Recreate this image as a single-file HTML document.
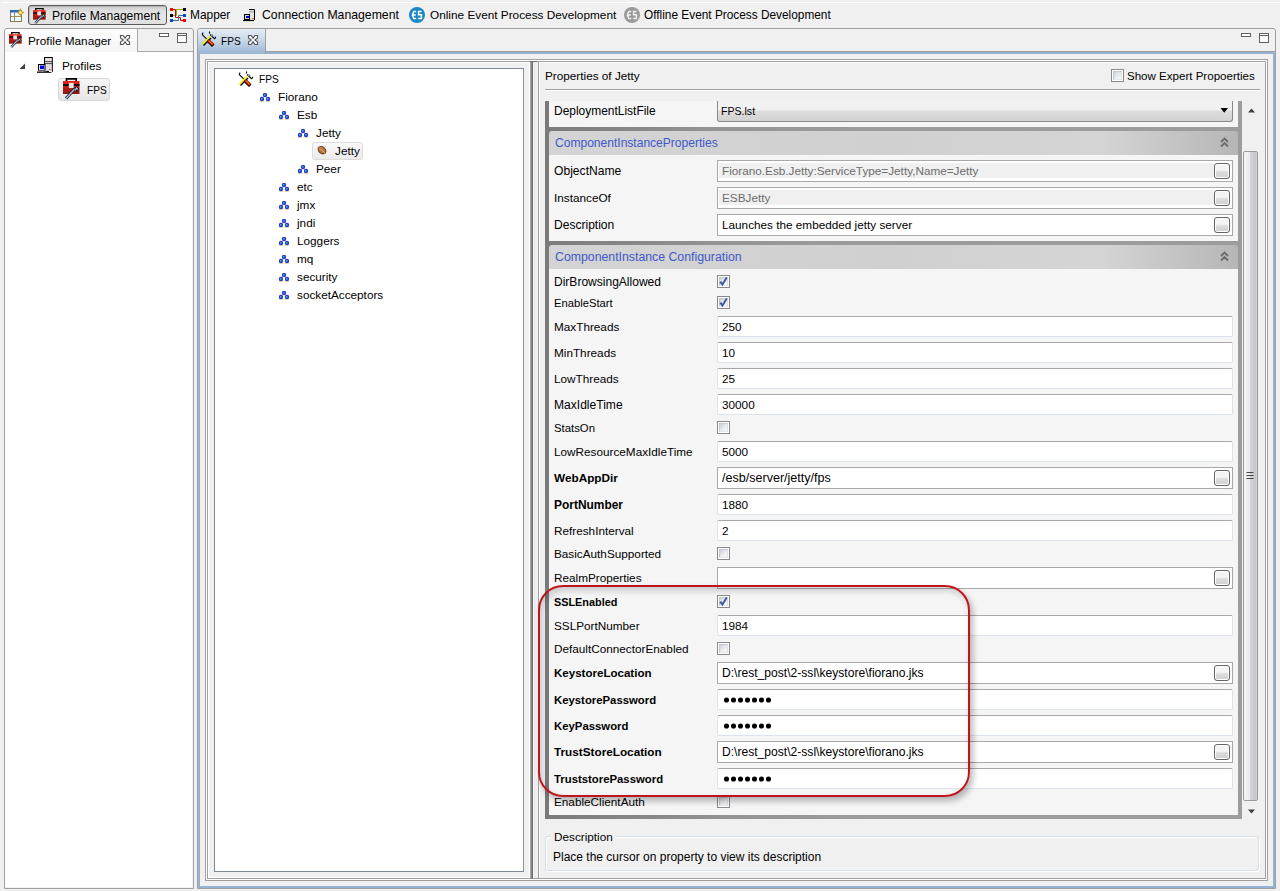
<!DOCTYPE html>
<html><head><meta charset="utf-8">
<style>
*{box-sizing:border-box;margin:0;padding:0}
html,body{width:1280px;height:891px;overflow:hidden;background:#f0f0f0;font-family:"Liberation Sans",sans-serif;font-size:11.75px;color:#000}
.a{position:absolute}
.t{position:absolute;white-space:nowrap;line-height:14px}
.b{font-weight:bold;font-size:11.35px}
.cb{width:13px;height:13px;border:1px solid #8a8a8a;background:#fff}
.cb::before{content:"";position:absolute;left:1px;top:1px;width:9px;height:9px;box-sizing:border-box;border:1px solid #c4c8d0;border-right-color:#e0e2e6;border-bottom-color:#e6e8ea;background:linear-gradient(135deg,#cdd1d8,#eceef0 60%,#f8f8f8)}
.cb svg{left:0;top:0}
.fp{width:516px;border:1px solid #dde3ea;border-top-color:#a8a8a8;border-radius:2px}
.fb{width:516px;border:1px solid #a8a8a8}
.btn{width:16px;height:16px;border:1.5px solid #646464;border-radius:3px;background:linear-gradient(#f4f4f4 45%,#dcdcdc 55%,#d0d0d0);box-shadow:inset 0 0 0 1px #fff}
.hdr{border-radius:3px 3px 0 0;background:linear-gradient(90deg,#d4d4d4 0%,#d0d0d0 50%,#d5d5d5 80%,#b6b6b6 100%)}
.hdt{color:#4058cc}

</style></head><body>
<!-- top white line -->
<div class="a" style="left:2px;top:2px;width:1278px;height:1px;background:#fff"></div>


<!-- TOOLBAR -->
<svg class="a" style="left:10px;top:8px" width="15" height="15" viewBox="0 0 15 15">
 <rect x="0.5" y="2.5" width="11" height="11" fill="#eaf8ff" stroke="#8a7a50"/>
 <rect x="0" y="2" width="10" height="2.5" fill="#2a6ac0"/>
 <line x1="4.5" y1="4" x2="4.5" y2="13" stroke="#8a8a70"/>
 <line x1="1" y1="8.5" x2="11" y2="8.5" stroke="#a09060"/>
 <path d="M10.5 0 L12 3 L14.5 4.5 L12 6 L10.5 9 L9 6 L6.5 4.5 L9 3 Z" fill="#c8a020"/>
 <circle cx="10.5" cy="4.5" r="1.2" fill="#fff8c0"/>
</svg>
<div class="a" style="left:28px;top:5px;width:139px;height:20px;border:1px solid #5a5a5a;border-radius:3px;background:linear-gradient(#cfcfcf,#e2e2e2 35%,#e6e6e6 60%,#dedede);box-shadow:inset 1px 1px 1px rgba(0,0,0,.15)"></div>
<svg class="a" style="left:33px;top:8px" width="13" height="16" viewBox="0 0 17 22" preserveAspectRatio="none">
 <defs><linearGradient id="tbg1" x1="0" y1="0" x2="0" y2="1"><stop offset="0" stop-color="#e82418"/><stop offset="1" stop-color="#8c1414"/></linearGradient></defs>
 <path d="M3.5 3.5 V0.8 H13.2 V3.5" fill="none" stroke="#000" stroke-width="1.7"/>
 <rect x="0" y="3" width="16.5" height="13" fill="url(#tbg1)"/>
 <rect x="0" y="6" width="16.5" height="2" fill="#141010"/>
 <rect x="6.2" y="5.2" width="4" height="4.5" fill="#e4e4e4" stroke="#fff" stroke-width="0.7"/>
 <path d="M3 20.5 L12.5 10" stroke="#111" stroke-width="3"/>
 <path d="M3 20.5 L12.5 10" stroke="#9cb8d0" stroke-width="1.8"/>
 <path d="M11 11.5 L13.5 8.5 L16 11 L15 12.5 L13 12 L13.8 14" stroke="#111" stroke-width="1" fill="#9cb8d0"/>
</svg>
<div class="t" style="left:52px;top:9px;font-size:12.1px">Profile Management</div>

<svg class="a" style="left:168px;top:6px" width="20" height="18" viewBox="0 0 20 18">
 <path d="M15 3.5 H8.5 V9.5 H5" stroke="#a0a000" stroke-width="1" fill="none"/>
 <path d="M5 3.5 H7.5 V11.5 H12.5 V14.5 H15" stroke="#b01010" stroke-width="1" fill="none"/>
 <path d="M5 14.5 H10.5 V9.5 H15" stroke="#3a6aa0" stroke-width="1" fill="none"/>
 <rect x="2" y="2" width="3" height="3" fill="#ff0000"/>
 <rect x="15" y="2" width="3" height="3" fill="#000"/>
 <rect x="2" y="8" width="3" height="3" fill="#000"/>
 <rect x="15" y="8" width="3" height="3" fill="#0050c0"/>
 <rect x="2" y="13" width="3" height="3" fill="#0050c0"/>
 <rect x="15" y="13" width="3" height="3" fill="#ff0000"/>
</svg>
<div class="t" style="left:190px;top:8px;font-size:11.9px">Mapper</div>

<svg class="a" style="left:238px;top:4px" width="22" height="22" viewBox="0 0 22 22">
 <rect x="11" y="5" width="6" height="11" fill="#e4e4e4"/>
 <path d="M11 5.5 H16.5 V16" stroke="#000" stroke-width="1" fill="none"/>
 <rect x="11" y="7" width="5" height="1.5" fill="#b0b0b0"/>
 <rect x="14" y="14" width="2" height="1" fill="#e06060"/>
 <rect x="6.5" y="10.5" width="5" height="5" fill="#d8d8c0" stroke="#000" stroke-width="1"/>
 <rect x="8" y="12" width="3" height="2" fill="#0000ff"/>
 <path d="M5 16.5 H16" stroke="#000" stroke-width="1.2"/>
</svg>
<div class="t" style="left:262px;top:8px;font-size:12.25px">Connection Management</div>

<svg class="a" style="left:409px;top:7px" width="16" height="16" viewBox="0 0 16 16">
 <circle cx="8" cy="8" r="8" fill="#1a87c9"/>
 <path d="M7.2 4.5 H4.8 L3.4 8 L4.8 11.5 H7.2 M3.8 8 H6.8" stroke="#fff" stroke-width="1.5" fill="none"/>
 <path d="M12.6 4.6 H9.6 V7.8 H12.4 V11.4 H9.2" stroke="#fff" stroke-width="1.5" fill="none"/>
</svg>
<div class="t" style="left:430px;top:8px;font-size:11.8px">Online Event Process Development</div>

<svg class="a" style="left:624px;top:7px" width="16" height="16" viewBox="0 0 16 16">
 <circle cx="8" cy="8" r="8" fill="#9a9a9a"/>
 <path d="M7.2 4.5 H4.8 L3.4 8 L4.8 11.5 H7.2 M3.8 8 H6.8" stroke="#eee" stroke-width="1.5" fill="none"/>
 <path d="M12.6 4.6 H9.6 V7.8 H12.4 V11.4 H9.2" stroke="#eee" stroke-width="1.5" fill="none"/>
</svg>
<div class="t" style="left:644px;top:8px;font-size:11.85px">Offline Event Process Development</div>



<!-- LEFT VIEW -->
<div class="a" style="left:4px;top:28px;width:190px;height:861px;border:1px solid #a0a0a0;border-radius:3px 3px 0 0;background:#f0f0f0"></div>
<div class="a" style="left:5px;top:52px;width:188px;height:836px;background:#fff"></div>
<div class="a" style="left:5px;top:29px;width:133px;height:23px;background:linear-gradient(#fdfdfd,#f4f4f4);border-right:1px solid #a8a8a8;border-radius:3px 0 0 0"></div>
<div class="a" style="left:137px;top:51px;width:56px;height:1px;background:#a8a8a8"></div>
<svg class="a" style="left:9px;top:32px" width="13" height="16" viewBox="0 0 17 22" preserveAspectRatio="none">
 <defs><linearGradient id="tbg2" x1="0" y1="0" x2="0" y2="1"><stop offset="0" stop-color="#e82418"/><stop offset="1" stop-color="#8c1414"/></linearGradient></defs>
 <path d="M3.5 3.5 V0.8 H13.2 V3.5" fill="none" stroke="#000" stroke-width="1.7"/>
 <rect x="0" y="3" width="16.5" height="13" fill="url(#tbg2)"/>
 <rect x="0" y="6" width="16.5" height="2" fill="#141010"/>
 <rect x="6.2" y="5.2" width="4" height="4.5" fill="#e4e4e4" stroke="#fff" stroke-width="0.7"/>
 <path d="M3 20.5 L12.5 10" stroke="#111" stroke-width="3"/>
 <path d="M3 20.5 L12.5 10" stroke="#9cb8d0" stroke-width="1.8"/>
 <path d="M11 11.5 L13.5 8.5 L16 11 L15 12.5 L13 12 L13.8 14" stroke="#111" stroke-width="1" fill="#9cb8d0"/>
</svg>
<div class="t" style="left:28px;top:34px;font-size:11.8px">Profile Manager</div>
<svg class="a" style="left:119px;top:34px" width="12" height="12" viewBox="0 0 12 12"><path d="M1.5 1.5 H4 L6 4.2 L8 1.5 H10.5 V4 L7.8 6 L10.5 8 V10.5 H8 L6 7.8 L4 10.5 H1.5 V8 L4.2 6 L1.5 4 Z" fill="#fff" stroke="#555" stroke-width="1.15"/></svg>
<div class="a" style="left:159px;top:33px;width:10px;height:4px;border:1px solid #606060;background:#fff"></div>
<div class="a" style="left:177px;top:33px;width:10px;height:10px;border:1px solid #606060;background:linear-gradient(#fff 1px,#606060 1px,#606060 2px,#fff 2px)"></div>
<svg class="a" style="left:19px;top:63px" width="7" height="7" viewBox="0 0 7 7"><path d="M6 0.5 V6 H0.5 Z" fill="#404040"/></svg>
<svg class="a" style="left:32px;top:54px" width="26" height="22" viewBox="0 0 26 22">
 <rect x="12.5" y="3.5" width="7.8" height="14" fill="#d0d0d0" stroke="#000" stroke-width="1"/>
 <rect x="13.5" y="4.5" width="6" height="2.2" fill="#e6e6e6"/>
 <path d="M13 7.5 H20 M13 9.5 H20" stroke="#333" stroke-width="0.8"/>
 <rect x="13.5" y="10.5" width="6" height="5.5" fill="#dcdcdc"/>
 <rect x="17" y="15" width="2" height="1" fill="#e07070"/>
 <rect x="6.5" y="10.5" width="6.5" height="6" fill="#e8e8d8" stroke="#000" stroke-width="1"/>
 <rect x="8" y="11.5" width="4" height="3.6" fill="#0000ff"/>
 <rect x="5.5" y="16.5" width="9" height="1.2" fill="#c0c0c0"/>
 <path d="M5 18.2 H19.5" stroke="#000" stroke-width="1.2"/>
 <rect x="17" y="17" width="3" height="1" fill="#fff"/>
</svg>
<div class="t" style="left:62px;top:59px;font-size:11.8px">Profiles</div>
<div class="a" style="left:58px;top:78px;width:52px;height:23px;border:1px solid #d8d8d8;border-radius:3px;background:linear-gradient(#f6f6f6,#e6e6e6)"></div>
<svg class="a" style="left:63px;top:78px" width="17" height="22" viewBox="0 0 17 22" preserveAspectRatio="none">
 <defs><linearGradient id="tbg3" x1="0" y1="0" x2="0" y2="1"><stop offset="0" stop-color="#e82418"/><stop offset="1" stop-color="#8c1414"/></linearGradient></defs>
 <path d="M3.5 3.5 V0.8 H13.2 V3.5" fill="none" stroke="#000" stroke-width="1.7"/>
 <rect x="0" y="3" width="16.5" height="13" fill="url(#tbg3)"/>
 <rect x="0" y="6" width="16.5" height="2" fill="#141010"/>
 <rect x="6.2" y="5.2" width="4" height="4.5" fill="#e4e4e4" stroke="#fff" stroke-width="0.7"/>
 <path d="M3 20.5 L12.5 10" stroke="#111" stroke-width="3"/>
 <path d="M3 20.5 L12.5 10" stroke="#9cb8d0" stroke-width="1.8"/>
 <path d="M11 11.5 L13.5 8.5 L16 11 L15 12.5 L13 12 L13.8 14" stroke="#111" stroke-width="1" fill="#9cb8d0"/>
</svg>
<div class="t" style="left:87px;top:83px;font-size:11.8px;transform:scaleX(.86);transform-origin:0 0">FPS</div>



<!-- EDITOR -->
<div class="a" style="left:197px;top:28px;width:1079px;height:861px;border:1px solid #a0a0a0;border-radius:3px 3px 0 0;background:#f0f0f0"></div>
<div class="a" style="left:198px;top:51px;width:1077px;height:1px;background:#a0a0a0"></div>
<div class="a" style="left:198px;top:52px;width:1077px;height:836px;border:2px solid #95b1d3;border-top-width:2px;background:#f0f0f0"></div>
<div class="a" style="left:198px;top:29px;width:68px;height:25px;background:linear-gradient(#e6edf6,#c8d7e8 45%,#9ab5d4);border-right:1px solid #a0a0a0;border-radius:3px 0 0 0"></div>
<svg class="a" style="left:201px;top:31px" width="16" height="16" viewBox="0 0 16 16">
 <path d="M2.2 1.6 L1.2 3.2 L2.2 4.8 M1.8 4.2 L8 10" stroke="#000" stroke-width="1.1" fill="none"/>
 <path d="M2.6 3.6 L6 6.8" stroke="#fff" stroke-width="0.8"/>
 <path d="M2.5 14.5 L10 7" stroke="#000" stroke-width="1.4"/>
 <path d="M1.2 13.2 L8.8 5.6" stroke="#f4f000" stroke-width="1.6"/>
 <path d="M7 9.5 L12.3 14.8" stroke="#000" stroke-width="3.6"/>
 <path d="M7.4 9.4 L12 14" stroke="#ff1000" stroke-width="2.2"/>
 <path d="M7.9 9.7 L11.5 13.3" stroke="#f4e000" stroke-width="0.7"/>
 <path d="M8.5 0.6 V2.4 M9.2 3.5 L13.8 8 M14.5 5.8 V7.5" stroke="#000" stroke-width="1.1" fill="none"/>
 <rect x="10" y="3.4" width="2.2" height="2" fill="#8a8a8a"/>
</svg>
<div class="t" style="left:221px;top:34px;font-size:11.8px;transform:scaleX(.86);transform-origin:0 0">FPS</div>
<svg class="a" style="left:247px;top:34px" width="12" height="12" viewBox="0 0 12 12"><path d="M1.5 1.5 H4 L6 4.2 L8 1.5 H10.5 V4 L7.8 6 L10.5 8 V10.5 H8 L6 7.8 L4 10.5 H1.5 V8 L4.2 6 L1.5 4 Z" fill="#fff" stroke="#555" stroke-width="1.15"/></svg>
<div class="a" style="left:1241px;top:33px;width:10px;height:4px;border:1px solid #606060;background:#fff"></div>
<div class="a" style="left:1259px;top:33px;width:10px;height:10px;border:1px solid #606060;background:linear-gradient(#fff 1px,#606060 1px,#606060 2px,#fff 2px)"></div>
<!-- frame -->
<div class="a" style="left:205px;top:59px;width:1063px;height:822px;border:1px solid #a0a0a0"></div>
<div class="a" style="left:206px;top:60px;width:1061px;height:820px;border:1px solid #fff"></div>
<div class="a" style="left:207px;top:61px;width:1059px;height:818px;border:1px solid #a0a0a0;border-right-color:#a0a0a0"></div>
<div class="a" style="left:208px;top:62px;width:322px;height:816px;border:1px solid #fff"></div>
<div class="a" style="left:5px;top:52px;width:188px;height:836px;border-right:1px solid #f2f2f2;border-bottom:1px solid #f2f2f2"></div>
<!-- tree box -->
<div class="a" style="left:214px;top:68px;width:310px;height:804px;border:1px solid #7f8a96;border-right-color:#8a929a;background:#fff"></div>
<!-- splitter -->
<div class="a" style="left:530px;top:61px;width:1px;height:818px;background:#a4a4a4"></div>
<div class="a" style="left:531px;top:61px;width:1px;height:818px;background:#8a8a8a"></div>
<div class="a" style="left:532px;top:61px;width:1px;height:818px;background:#6c6c6c"></div>
<div class="a" style="left:530px;top:61px;width:7px;height:1px;background:#6c6c6c"></div>
<div class="a" style="left:533px;top:62px;width:3px;height:816px;background:linear-gradient(90deg,#fafafa,#e8e8e8 60%,#f4f4f4)"></div>
<!-- props frame -->
<div class="a" style="left:538px;top:61px;width:728px;height:818px;border:1px solid #a0a0a0;border-left-color:#a0a0a0"></div>
<div class="a" style="left:539px;top:62px;width:726px;height:816px;border-left:1px solid #fff;border-top:1px solid #fff"></div>
<!-- TREE -->
<svg class="a" style="left:238px;top:71px" width="16" height="16" viewBox="0 0 16 16">
 <path d="M2.2 1.6 L1.2 3.2 L2.2 4.8 M1.8 4.2 L8 10" stroke="#000" stroke-width="1.1" fill="none"/>
 <path d="M2.6 3.6 L6 6.8" stroke="#fff" stroke-width="0.8"/>
 <path d="M2.5 14.5 L10 7" stroke="#000" stroke-width="1.4"/>
 <path d="M1.2 13.2 L8.8 5.6" stroke="#f4f000" stroke-width="1.6"/>
 <path d="M7 9.5 L12.3 14.8" stroke="#000" stroke-width="3.6"/>
 <path d="M7.4 9.4 L12 14" stroke="#ff1000" stroke-width="2.2"/>
 <path d="M7.9 9.7 L11.5 13.3" stroke="#f4e000" stroke-width="0.7"/>
 <path d="M8.5 0.6 V2.4 M9.2 3.5 L13.8 8 M14.5 5.8 V7.5" stroke="#000" stroke-width="1.1" fill="none"/>
 <rect x="10" y="3.4" width="2.2" height="2" fill="#8a8a8a"/>
</svg><div class="t" style="left:259px;top:72px;transform:scaleX(.86);transform-origin:0 0">FPS</div>
<svg class="a" style="left:260px;top:93px" width="12" height="10" viewBox="0 0 12 10"><path d="M0 8.5 H4.5 M5.5 8.5 H10.5" stroke="#e4e4c0" stroke-width="1.2"/><path d="M6.5 1 V4 M9.5 5 V8" stroke="#f0f0d0" stroke-width="1"/><circle cx="5" cy="2" r="2.2" fill="#2a36c8"/><circle cx="2" cy="6" r="2.2" fill="#2a36c8"/><circle cx="8" cy="6" r="2.2" fill="#2a36c8"/><circle cx="4.8" cy="1.8" r="0.9" fill="#40c0c8"/><circle cx="1.8" cy="5.8" r="0.9" fill="#40c0c8"/><circle cx="7.8" cy="5.8" r="0.9" fill="#40c0c8"/></svg>
<div class="t" style="left:278px;top:90px">Fiorano</div>
<svg class="a" style="left:279px;top:111px" width="12" height="10" viewBox="0 0 12 10"><path d="M0 8.5 H4.5 M5.5 8.5 H10.5" stroke="#e4e4c0" stroke-width="1.2"/><path d="M6.5 1 V4 M9.5 5 V8" stroke="#f0f0d0" stroke-width="1"/><circle cx="5" cy="2" r="2.2" fill="#2a36c8"/><circle cx="2" cy="6" r="2.2" fill="#2a36c8"/><circle cx="8" cy="6" r="2.2" fill="#2a36c8"/><circle cx="4.8" cy="1.8" r="0.9" fill="#40c0c8"/><circle cx="1.8" cy="5.8" r="0.9" fill="#40c0c8"/><circle cx="7.8" cy="5.8" r="0.9" fill="#40c0c8"/></svg>
<div class="t" style="left:297px;top:108px">Esb</div>
<svg class="a" style="left:298px;top:129px" width="12" height="10" viewBox="0 0 12 10"><path d="M0 8.5 H4.5 M5.5 8.5 H10.5" stroke="#e4e4c0" stroke-width="1.2"/><path d="M6.5 1 V4 M9.5 5 V8" stroke="#f0f0d0" stroke-width="1"/><circle cx="5" cy="2" r="2.2" fill="#2a36c8"/><circle cx="2" cy="6" r="2.2" fill="#2a36c8"/><circle cx="8" cy="6" r="2.2" fill="#2a36c8"/><circle cx="4.8" cy="1.8" r="0.9" fill="#40c0c8"/><circle cx="1.8" cy="5.8" r="0.9" fill="#40c0c8"/><circle cx="7.8" cy="5.8" r="0.9" fill="#40c0c8"/></svg>
<div class="t" style="left:316px;top:126px">Jetty</div>
<div class="a" style="left:312px;top:142px;width:51px;height:18px;border:1px solid #dcdcdc;border-radius:3px;background:linear-gradient(#f9f9f9,#ebebeb)"></div>
<svg class="a" style="left:317px;top:145px" width="11" height="11" viewBox="0 0 11 11"><ellipse cx="5" cy="5.2" rx="4.8" ry="3.8" transform="rotate(40 5 5.2)" fill="#7a4020"/><ellipse cx="5" cy="5" rx="3.6" ry="2.7" transform="rotate(40 5 5)" fill="#b87848"/><path d="M2 2.5 L8 8" stroke="#e0b040" stroke-width="0.9"/></svg>
<div class="t" style="left:335px;top:144px">Jetty</div>
<svg class="a" style="left:298px;top:165px" width="12" height="10" viewBox="0 0 12 10"><path d="M0 8.5 H4.5 M5.5 8.5 H10.5" stroke="#e4e4c0" stroke-width="1.2"/><path d="M6.5 1 V4 M9.5 5 V8" stroke="#f0f0d0" stroke-width="1"/><circle cx="5" cy="2" r="2.2" fill="#2a36c8"/><circle cx="2" cy="6" r="2.2" fill="#2a36c8"/><circle cx="8" cy="6" r="2.2" fill="#2a36c8"/><circle cx="4.8" cy="1.8" r="0.9" fill="#40c0c8"/><circle cx="1.8" cy="5.8" r="0.9" fill="#40c0c8"/><circle cx="7.8" cy="5.8" r="0.9" fill="#40c0c8"/></svg>
<div class="t" style="left:316px;top:162px">Peer</div>
<svg class="a" style="left:279px;top:183px" width="12" height="10" viewBox="0 0 12 10"><path d="M0 8.5 H4.5 M5.5 8.5 H10.5" stroke="#e4e4c0" stroke-width="1.2"/><path d="M6.5 1 V4 M9.5 5 V8" stroke="#f0f0d0" stroke-width="1"/><circle cx="5" cy="2" r="2.2" fill="#2a36c8"/><circle cx="2" cy="6" r="2.2" fill="#2a36c8"/><circle cx="8" cy="6" r="2.2" fill="#2a36c8"/><circle cx="4.8" cy="1.8" r="0.9" fill="#40c0c8"/><circle cx="1.8" cy="5.8" r="0.9" fill="#40c0c8"/><circle cx="7.8" cy="5.8" r="0.9" fill="#40c0c8"/></svg>
<div class="t" style="left:297px;top:180px">etc</div>
<svg class="a" style="left:279px;top:201px" width="12" height="10" viewBox="0 0 12 10"><path d="M0 8.5 H4.5 M5.5 8.5 H10.5" stroke="#e4e4c0" stroke-width="1.2"/><path d="M6.5 1 V4 M9.5 5 V8" stroke="#f0f0d0" stroke-width="1"/><circle cx="5" cy="2" r="2.2" fill="#2a36c8"/><circle cx="2" cy="6" r="2.2" fill="#2a36c8"/><circle cx="8" cy="6" r="2.2" fill="#2a36c8"/><circle cx="4.8" cy="1.8" r="0.9" fill="#40c0c8"/><circle cx="1.8" cy="5.8" r="0.9" fill="#40c0c8"/><circle cx="7.8" cy="5.8" r="0.9" fill="#40c0c8"/></svg>
<div class="t" style="left:297px;top:198px">jmx</div>
<svg class="a" style="left:279px;top:219px" width="12" height="10" viewBox="0 0 12 10"><path d="M0 8.5 H4.5 M5.5 8.5 H10.5" stroke="#e4e4c0" stroke-width="1.2"/><path d="M6.5 1 V4 M9.5 5 V8" stroke="#f0f0d0" stroke-width="1"/><circle cx="5" cy="2" r="2.2" fill="#2a36c8"/><circle cx="2" cy="6" r="2.2" fill="#2a36c8"/><circle cx="8" cy="6" r="2.2" fill="#2a36c8"/><circle cx="4.8" cy="1.8" r="0.9" fill="#40c0c8"/><circle cx="1.8" cy="5.8" r="0.9" fill="#40c0c8"/><circle cx="7.8" cy="5.8" r="0.9" fill="#40c0c8"/></svg>
<div class="t" style="left:297px;top:216px">jndi</div>
<svg class="a" style="left:279px;top:237px" width="12" height="10" viewBox="0 0 12 10"><path d="M0 8.5 H4.5 M5.5 8.5 H10.5" stroke="#e4e4c0" stroke-width="1.2"/><path d="M6.5 1 V4 M9.5 5 V8" stroke="#f0f0d0" stroke-width="1"/><circle cx="5" cy="2" r="2.2" fill="#2a36c8"/><circle cx="2" cy="6" r="2.2" fill="#2a36c8"/><circle cx="8" cy="6" r="2.2" fill="#2a36c8"/><circle cx="4.8" cy="1.8" r="0.9" fill="#40c0c8"/><circle cx="1.8" cy="5.8" r="0.9" fill="#40c0c8"/><circle cx="7.8" cy="5.8" r="0.9" fill="#40c0c8"/></svg>
<div class="t" style="left:297px;top:234px">Loggers</div>
<svg class="a" style="left:279px;top:255px" width="12" height="10" viewBox="0 0 12 10"><path d="M0 8.5 H4.5 M5.5 8.5 H10.5" stroke="#e4e4c0" stroke-width="1.2"/><path d="M6.5 1 V4 M9.5 5 V8" stroke="#f0f0d0" stroke-width="1"/><circle cx="5" cy="2" r="2.2" fill="#2a36c8"/><circle cx="2" cy="6" r="2.2" fill="#2a36c8"/><circle cx="8" cy="6" r="2.2" fill="#2a36c8"/><circle cx="4.8" cy="1.8" r="0.9" fill="#40c0c8"/><circle cx="1.8" cy="5.8" r="0.9" fill="#40c0c8"/><circle cx="7.8" cy="5.8" r="0.9" fill="#40c0c8"/></svg>
<div class="t" style="left:297px;top:252px">mq</div>
<svg class="a" style="left:279px;top:273px" width="12" height="10" viewBox="0 0 12 10"><path d="M0 8.5 H4.5 M5.5 8.5 H10.5" stroke="#e4e4c0" stroke-width="1.2"/><path d="M6.5 1 V4 M9.5 5 V8" stroke="#f0f0d0" stroke-width="1"/><circle cx="5" cy="2" r="2.2" fill="#2a36c8"/><circle cx="2" cy="6" r="2.2" fill="#2a36c8"/><circle cx="8" cy="6" r="2.2" fill="#2a36c8"/><circle cx="4.8" cy="1.8" r="0.9" fill="#40c0c8"/><circle cx="1.8" cy="5.8" r="0.9" fill="#40c0c8"/><circle cx="7.8" cy="5.8" r="0.9" fill="#40c0c8"/></svg>
<div class="t" style="left:297px;top:270px">security</div>
<svg class="a" style="left:279px;top:291px" width="12" height="10" viewBox="0 0 12 10"><path d="M0 8.5 H4.5 M5.5 8.5 H10.5" stroke="#e4e4c0" stroke-width="1.2"/><path d="M6.5 1 V4 M9.5 5 V8" stroke="#f0f0d0" stroke-width="1"/><circle cx="5" cy="2" r="2.2" fill="#2a36c8"/><circle cx="2" cy="6" r="2.2" fill="#2a36c8"/><circle cx="8" cy="6" r="2.2" fill="#2a36c8"/><circle cx="4.8" cy="1.8" r="0.9" fill="#40c0c8"/><circle cx="1.8" cy="5.8" r="0.9" fill="#40c0c8"/><circle cx="7.8" cy="5.8" r="0.9" fill="#40c0c8"/></svg>
<div class="t" style="left:297px;top:288px">socketAcceptors</div>

<!-- PROPS -->
<div class="t" style="left:545px;top:69px">Properties of Jetty</div>
<div class="a cb" style="left:1111px;top:69px"></div>
<div class="t" style="left:1127px;top:69px;font-size:11.55px">Show Expert Propoerties</div>
<div class="a" style="left:545px;top:89px;width:715px;height:1px;background:#a0a0a0"></div>
<div class="a" style="left:545px;top:90px;width:715px;height:1px;background:#fff"></div>
<!-- scrolled content -->
<div class="a" style="left:545px;top:101px;width:697px;height:718px;background:#f5f5f5"></div>
<div class="a" style="left:545px;top:101px;width:4px;height:718px;background:#7a7a7a"></div>
<div class="a" style="left:1238px;top:101px;width:4px;height:718px;background:#9c9c9c"></div>
<div class="a" style="left:545px;top:815px;width:697px;height:4px;background:linear-gradient(90deg,#7a7a7a,#929292 25%,#9c9c9c 45%)"></div>
<!-- row deployment -->
<div class="a" style="left:717px;top:101px;width:516px;height:21px;border:1px solid #8a8a8a;border-top:none;border-radius:0 0 3px 3px;background:linear-gradient(#f3f3f3 0,#f0f0f0 45%,#dedede 50%,#d2d2d2)"></div>
<svg class="a" style="left:1220px;top:108px" width="9" height="5" viewBox="0 0 9 5"><path d="M0.5 0 H8 L4.25 4.8 Z" fill="#000"/></svg>
<div class="t" style="left:554px;top:104px;font-size:11.96px">DeploymentListFile</div>
<div class="t" style="left:721px;top:104px;transform:scaleX(.9);transform-origin:0 0">FPS.lst</div>
<!-- section 1 -->
<div class="a" style="left:549px;top:127px;width:689px;height:7px;background:linear-gradient(90deg,#7c7c7c,#949494 25%,#9c9c9c 45%)"></div>
<div class="a hdr" style="left:549px;top:131px;width:689px;height:24px"></div>
<div class="t hdt" style="left:555px;top:136px;font-size:12.05px">ComponentInstanceProperties</div>
<svg class="a chev" style="left:1220px;top:137px" width="9" height="11" viewBox="0 0 9 11"><path d="M1 5 L4.5 1.5 L8 5 M1 9.5 L4.5 6 L8 9.5" stroke="#6a6a6a" stroke-width="1.8" fill="none"/></svg>
<div class="t" style="left:554px;top:164px;font-size:12.11px">ObjectName</div>
<div class="a fb" style="left:717px;top:160px;height:22px;background:#fff"></div>
<div class="a" style="left:719px;top:163px;width:495px;height:15px;background:#f0f0f0"></div>
<div class="a btn" style="left:1214px;top:163px"></div>
<div class="t" style="left:722px;top:164px;color:#6d6d6d">Fiorano.Esb.Jetty:ServiceType=Jetty,Name=Jetty</div>
<div class="t" style="left:554px;top:191px">InstanceOf</div>
<div class="a fb" style="left:717px;top:187px;height:22px;background:#fff"></div>
<div class="a" style="left:719px;top:190px;width:495px;height:15px;background:#f0f0f0"></div>
<div class="a btn" style="left:1214px;top:190px"></div>
<div class="t" style="left:722px;top:191px;color:#6d6d6d">ESBJetty</div>
<div class="t" style="left:554px;top:218px;font-size:12.06px">Description</div>
<div class="a fb" style="left:717px;top:214px;height:22px;background:#fff"></div>
<div class="a btn" style="left:1214px;top:217px"></div>
<div class="t" style="left:722px;top:218px;">Launches the embedded jetty server</div>
<!-- section 2 -->
<div class="a" style="left:549px;top:241px;width:689px;height:7px;background:linear-gradient(90deg,#7c7c7c,#949494 25%,#9c9c9c 45%)"></div>
<div class="a hdr" style="left:549px;top:245px;width:689px;height:24px"></div>
<div class="t hdt" style="left:555px;top:250px;font-size:12.3px">ComponentInstance Configuration</div>
<svg class="a chev" style="left:1220px;top:251px" width="9" height="11" viewBox="0 0 9 11"><path d="M1 5 L4.5 1.5 L8 5 M1 9.5 L4.5 6 L8 9.5" stroke="#6a6a6a" stroke-width="1.8" fill="none"/></svg>
<div class="t" style="left:554px;top:275px;font-size:12.04px">DirBrowsingAllowed</div>
<div class="a cb" style="left:717px;top:275px"><svg viewBox="0 0 11 11" width="11" height="11" style="position:absolute;left:0;top:0"><path d="M2.3 5.6 L4.4 8.6 L8.8 1.6" stroke="#3a56a0" stroke-width="1.9" fill="none"/></svg></div>
<div class="t" style="left:554px;top:296px;font-size:11.22px">EnableStart</div>
<div class="a cb" style="left:717px;top:296px"><svg viewBox="0 0 11 11" width="11" height="11" style="position:absolute;left:0;top:0"><path d="M2.3 5.6 L4.4 8.6 L8.8 1.6" stroke="#3a56a0" stroke-width="1.9" fill="none"/></svg></div>
<div class="t" style="left:554px;top:320px">MaxThreads</div>
<div class="a fp" style="left:717px;top:316px;height:21px;background:#fff"></div>
<div class="t" style="left:722px;top:320px;">250</div>
<div class="t" style="left:554px;top:346px">MinThreads</div>
<div class="a fp" style="left:717px;top:342px;height:21px;background:#fff"></div>
<div class="t" style="left:722px;top:346px;">10</div>
<div class="t" style="left:554px;top:372px">LowThreads</div>
<div class="a fp" style="left:717px;top:368px;height:21px;background:#fff"></div>
<div class="t" style="left:722px;top:372px;">25</div>
<div class="t" style="left:554px;top:398px;font-size:12.07px">MaxIdleTime</div>
<div class="a fp" style="left:717px;top:394px;height:21px;background:#fff"></div>
<div class="t" style="left:722px;top:398px;">30000</div>
<div class="t" style="left:554px;top:421px;font-size:11.33px">StatsOn</div>
<div class="a cb" style="left:717px;top:421px"></div>
<div class="t" style="left:554px;top:445px">LowResourceMaxIdleTime</div>
<div class="a fp" style="left:717px;top:441px;height:21px;background:#fff"></div>
<div class="t" style="left:722px;top:445px;">5000</div>
<div class="t b" style="left:554px;top:471px;font-size:11.79px">WebAppDir</div>
<div class="a fb" style="left:717px;top:467px;height:22px;background:#fff"></div>
<div class="a btn" style="left:1214px;top:470px"></div>
<div class="t" style="left:722px;top:471px;font-size:12.55px">/esb/server/jetty/fps</div>
<div class="t b" style="left:554px;top:498px;font-size:11.94px">PortNumber</div>
<div class="a fp" style="left:717px;top:494px;height:21px;background:#fff"></div>
<div class="t" style="left:722px;top:498px;">1880</div>
<div class="t" style="left:554px;top:524px">RefreshInterval</div>
<div class="a fp" style="left:717px;top:520px;height:21px;background:#fff"></div>
<div class="t" style="left:722px;top:524px;">2</div>
<div class="t" style="left:554px;top:547px">BasicAuthSupported</div>
<div class="a cb" style="left:717px;top:547px"></div>
<div class="t" style="left:554px;top:571px">RealmProperties</div>
<div class="a fb" style="left:717px;top:567px;height:22px;background:#fff"></div>
<div class="a btn" style="left:1214px;top:570px"></div>
<div class="t b" style="left:554px;top:595px;font-size:10.86px">SSLEnabled</div>
<div class="a cb" style="left:717px;top:595px"><svg viewBox="0 0 11 11" width="11" height="11" style="position:absolute;left:0;top:0"><path d="M2.3 5.6 L4.4 8.6 L8.8 1.6" stroke="#3a56a0" stroke-width="1.9" fill="none"/></svg></div>
<div class="t" style="left:554px;top:619px">SSLPortNumber</div>
<div class="a fp" style="left:717px;top:615px;height:21px;background:#fff"></div>
<div class="t" style="left:722px;top:619px;">1984</div>
<div class="t" style="left:554px;top:642px">DefaultConnectorEnabled</div>
<div class="a cb" style="left:717px;top:642px"></div>
<div class="t b" style="left:554px;top:666px;font-size:11.55px">KeystoreLocation</div>
<div class="a fb" style="left:717px;top:662px;height:22px;background:#fff"></div>
<div class="a btn" style="left:1214px;top:665px"></div>
<div class="t" style="left:722px;top:666px;font-size:12.1px">D:\rest_post\2-ssl\keystore\fiorano.jks</div>
<div class="t b" style="left:554px;top:693px">KeystorePassword</div>
<div class="a fp" style="left:717px;top:689px;height:21px;background:#fff"></div>
<svg class="a" style="left:723px;top:697px" width="50" height="6" viewBox="0 0 50 6" fill="#000"><circle cx="3.5" cy="3" r="2.55"/><circle cx="10.5" cy="3" r="2.55"/><circle cx="17.5" cy="3" r="2.55"/><circle cx="24.5" cy="3" r="2.55"/><circle cx="31.5" cy="3" r="2.55"/><circle cx="38.5" cy="3" r="2.55"/><circle cx="45.5" cy="3" r="2.55"/></svg>
<div class="t b" style="left:554px;top:719px">KeyPassword</div>
<div class="a fp" style="left:717px;top:715px;height:21px;background:#fff"></div>
<svg class="a" style="left:723px;top:723px" width="50" height="6" viewBox="0 0 50 6" fill="#000"><circle cx="3.5" cy="3" r="2.55"/><circle cx="10.5" cy="3" r="2.55"/><circle cx="17.5" cy="3" r="2.55"/><circle cx="24.5" cy="3" r="2.55"/><circle cx="31.5" cy="3" r="2.55"/><circle cx="38.5" cy="3" r="2.55"/><circle cx="45.5" cy="3" r="2.55"/></svg>
<div class="t b" style="left:554px;top:745px;font-size:11.75px">TrustStoreLocation</div>
<div class="a fb" style="left:717px;top:741px;height:22px;background:#fff"></div>
<div class="a btn" style="left:1214px;top:744px"></div>
<div class="t" style="left:722px;top:745px;font-size:12.1px">D:\rest_post\2-ssl\keystore\fiorano.jks</div>
<div class="t b" style="left:554px;top:772px">TruststorePassword</div>
<div class="a fp" style="left:717px;top:768px;height:21px;background:#fff"></div>
<svg class="a" style="left:723px;top:776px" width="50" height="6" viewBox="0 0 50 6" fill="#000"><circle cx="3.5" cy="3" r="2.55"/><circle cx="10.5" cy="3" r="2.55"/><circle cx="17.5" cy="3" r="2.55"/><circle cx="24.5" cy="3" r="2.55"/><circle cx="31.5" cy="3" r="2.55"/><circle cx="38.5" cy="3" r="2.55"/><circle cx="45.5" cy="3" r="2.55"/></svg>
<div class="t" style="left:554px;top:795px">EnableClientAuth</div>
<div class="a cb" style="left:717px;top:795px"></div>
<!-- scrollbar -->
<div class="a" style="left:1242px;top:101px;width:16px;height:718px;background:#f0f0f0"></div>
<svg class="a" style="left:1248px;top:108px" width="7" height="5" viewBox="0 0 7 5"><path d="M0 4.5 L3.5 0.5 L7 4.5 Z" fill="#404040"/></svg>
<svg class="a" style="left:1248px;top:809px" width="7" height="5" viewBox="0 0 7 5"><path d="M0 0.5 L3.5 4.5 L7 0.5 Z" fill="#404040"/></svg>
<div class="a" style="left:1243px;top:151px;width:15px;height:650px;border:1px solid #9a9a9a;border-radius:2px;background:linear-gradient(90deg,#fafafa 0,#f0f0f0 12%,#ececec 42%,#d6d6da 46%,#cacace 80%,#c6c6ca 88%,#d6d6d6 100%)"></div>
<svg class="a" style="left:1246px;top:472px" width="8" height="8" viewBox="0 0 8 8"><path d="M0.5 0.5 H7.5 M0.5 3.5 H7.5 M0.5 6.5 H7.5" stroke="#444" stroke-width="1"/></svg>
<!-- description -->
<div class="a" style="left:545px;top:836px;width:714px;height:35px;border:1px solid #d5dfe5;border-radius:3px;box-shadow:1px 1px 0 #fff, inset 1px 1px 0 #fff"></div>
<div class="a" style="left:551px;top:831px;width:65px;height:10px;background:#f0f0f0"></div>
<div class="t" style="left:554px;top:830px">Description</div>
<div class="t" style="left:553px;top:850px;font-size:12px">Place the cursor on property to view its description</div>
<!-- annotation -->
<div class="a" style="left:538px;top:585px;width:432px;height:212px;border:2px solid #c0141c;border-radius:25px;box-shadow:3px 4px 6px rgba(0,0,0,.28), inset 2px 4px 6px rgba(0,0,0,.17)"></div>



</body></html>
